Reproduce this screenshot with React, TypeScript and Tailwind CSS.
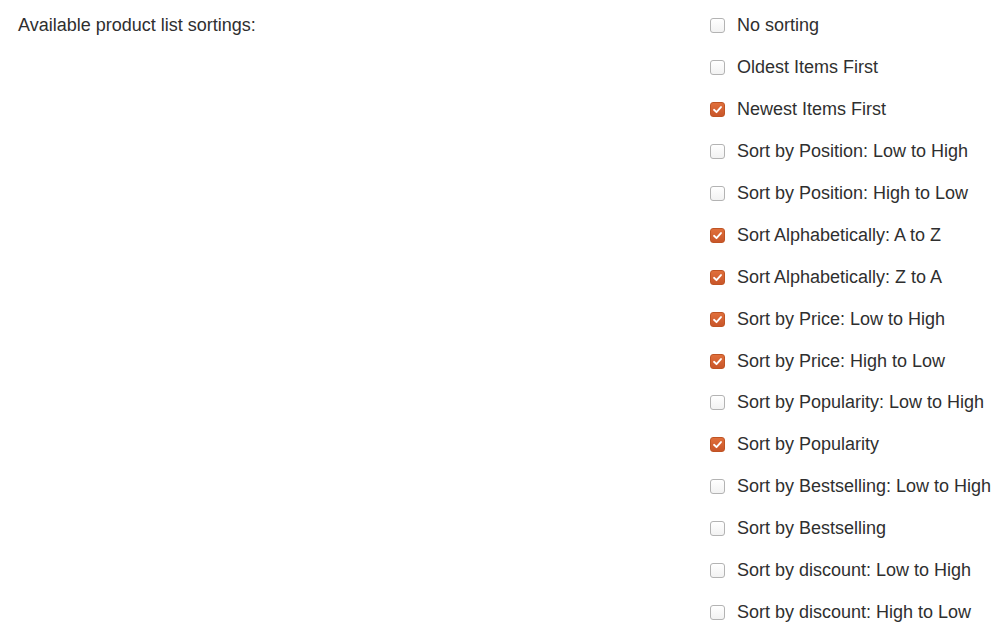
import React from 'react';

const OPTIONS: { label: string; checked: boolean }[] = [
  { label: 'No sorting', checked: false },
  { label: 'Oldest Items First', checked: false },
  { label: 'Newest Items First', checked: true },
  { label: 'Sort by Position: Low to High', checked: false },
  { label: 'Sort by Position: High to Low', checked: false },
  { label: 'Sort Alphabetically: A to Z', checked: true },
  { label: 'Sort Alphabetically: Z to A', checked: true },
  { label: 'Sort by Price: Low to High', checked: true },
  { label: 'Sort by Price: High to Low', checked: true },
  { label: 'Sort by Popularity: Low to High', checked: false },
  { label: 'Sort by Popularity', checked: true },
  { label: 'Sort by Bestselling: Low to High', checked: false },
  { label: 'Sort by Bestselling', checked: false },
  { label: 'Sort by discount: Low to High', checked: false },
  { label: 'Sort by discount: High to Low', checked: false },
];

const Box: React.FC<{ checked: boolean }> = ({ checked }) =>
  checked ? (
    <span className="w-[15px] h-[15px] rounded-[3px] border border-[#bf5424] bg-gradient-to-b from-[#e06f3b] to-[#c9562a] flex items-center justify-center shrink-0">
      <svg width="11" height="11" viewBox="0 0 12 12">
        <path d="M2.2 6.3 L4.9 8.9 L9.8 3.3" fill="none" stroke="#fff" strokeWidth="2" strokeLinecap="round" strokeLinejoin="round" />
      </svg>
    </span>
  ) : (
    <span className="w-[15px] h-[15px] rounded-[3px] border border-[#b3b3b3] bg-gradient-to-b from-white to-[#f2f2f2] shrink-0" />
  );

export default function App() {
  return (
    <div className="w-[1000px] h-[640px] bg-white overflow-hidden text-[#2f2f2f] text-[18px] flex pt-[5px]" style={{ fontFamily: '"Liberation Sans", Arial, sans-serif' }}>
      <div className="w-[710px] pl-[18px]">
        <div className="h-[41.9px] flex items-center">Available product list sortings:</div>
      </div>
      <div className="flex flex-col">
        {OPTIONS.map((o) => (
          <label key={o.label} className="h-[41.9px] flex items-center gap-[12px]">
            <Box checked={o.checked} />
            <span>{o.label}</span>
          </label>
        ))}
      </div>
    </div>
  );
}
